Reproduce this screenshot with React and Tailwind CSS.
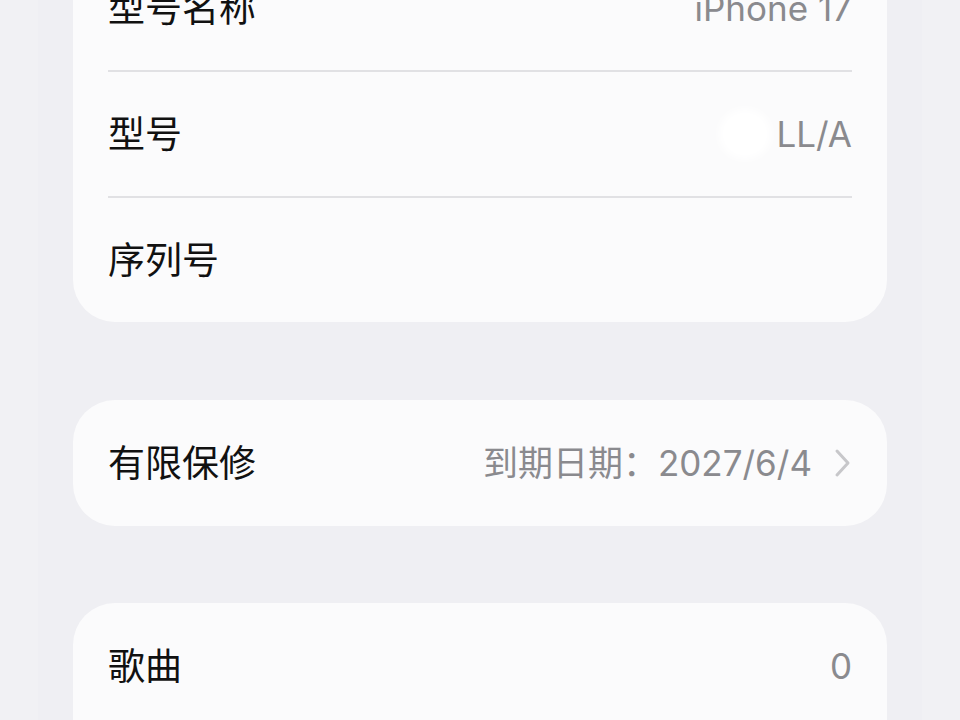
import React from 'react';

const font = { fontFamily: 'Inter, "Noto Sans CJK SC", "Noto Sans", sans-serif' };

const Chevron = () => (
  <svg width="18" height="30" viewBox="0 0 18 30" fill="none" className="ml-[22px]">
    <path d="M3 3 L14 15 L3 27" stroke="#c7c7ca" strokeWidth="3" strokeLinecap="round" strokeLinejoin="round" />
  </svg>
);

const Row = ({ label, value, chevron, blob, h = 'h-[124px]' }) => (
  <div className={`flex items-center justify-between ${h}`}>
    <span className="text-[37px] text-[#111111] leading-none">{label}</span>
    <div className="relative flex items-center">
      {blob && (
        <div className="absolute -left-[58px] top-1/2 -translate-y-1/2 w-[52px] h-[50px] rounded-full bg-white blur-[4px]" />
      )}
      {value && <span className="text-[35px] text-[#8a8a8e] leading-none">{value}</span>}
      {chevron && <Chevron />}
    </div>
  </div>
);

const Sep = () => <div className="h-[2px] bg-[#e1e1e4]" />;

export default function App() {
  return (
    <div className="flex w-[960px] h-[720px] overflow-hidden bg-[#efeff3]" style={font}>
      <div className="w-[38px] shrink-0 bg-[#f1f1f4]" />
      <div className="flex-1 flex flex-col px-[35px]">
        <div className="-mt-[54px] rounded-b-[42px] bg-[#fbfbfc] px-[35px]">
          <Row label="型号名称" value="iPhone 17" />
          <Sep />
          <Row label="型号" value="LL/A" blob />
          <Sep />
          <Row label="序列号" />
        </div>
        <div className="mt-[78px] rounded-[42px] bg-[#fbfbfc] px-[35px]">
          <Row label="有限保修" value="到期日期：2027/6/4" chevron h="h-[126px]" />
        </div>
        <div className="mt-[77px] rounded-t-[42px] bg-[#fbfbfc] px-[35px] flex-1">
          <Row label="歌曲" value="0" h="h-[126px]" />
        </div>
      </div>
      <div className="w-[38px] shrink-0 bg-[#f1f1f4]" />
    </div>
  );
}
